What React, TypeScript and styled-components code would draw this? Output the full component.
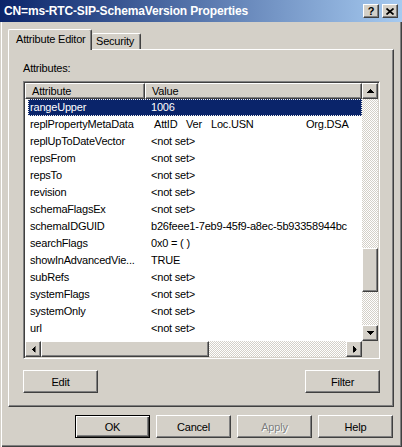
import React from 'react';
import styled, { createGlobalStyle, css } from 'styled-components';

const FACE = '#D4D0C8';
const SHADOW = '#808080';
const DARK = '#404040';
const NAVY = '#0A246A';

const GlobalStyle = createGlobalStyle`
  html, body {
    margin: 0;
    padding: 0;
    background: ${FACE};
  }
  body {
    font-family: "Liberation Sans", Arial, sans-serif;
    font-size: 11px;
    letter-spacing: -0.2px;
    color: #000;
  }
  * { box-sizing: border-box; }
`;

/* Classic Windows 3D edges */
const raised = css`
  border: 1px solid;
  border-color: #fff ${DARK} ${DARK} #fff;
  box-shadow: inset -1px -1px 0 ${SHADOW}, inset 1px 1px 0 ${FACE};
  background: ${FACE};
`;

const checker = css`
  background-color: #fff;
  background-image: repeating-conic-gradient(${FACE} 0 25%, #fff 0 50%);
  background-size: 2px 2px;
`;

const Window = styled.div`
  width: 402px;
  height: 447px;
  background: ${FACE};
  display: flex;
  flex-direction: column;
  box-shadow: inset 1px 0 0 ${FACE}, inset 2px 0 0 #fff, inset -1px -1px 0 ${DARK},
    inset -2px -2px 0 ${SHADOW};
`;

const TitleBar = styled.div`
  height: 22px;
  flex: none;
  display: flex;
  align-items: center;
  padding: 0 4px 0 4px;
  background: linear-gradient(to right, ${NAVY}, #a6caf0);
  color: #fff;
`;

const Title = styled.span`
  flex: 1;
  font: bold 12px "Liberation Sans", Arial, sans-serif;
  letter-spacing: -0.15px;
  white-space: nowrap;
`;

const CaptionButtons = styled.div`
  display: flex;
  gap: 3px;
`;

const CaptionButton = styled.div`
  ${raised};
  width: 16px;
  height: 14px;
  display: grid;
  place-items: center;
  color: #000;
  font: bold 11px "Liberation Sans", Arial, sans-serif;
  line-height: 12px;
`;

const Body = styled.div`
  flex: 1;
  display: flex;
  flex-direction: column;
  padding: 7px 8px 0 8px;
`;

const TabStrip = styled.div`
  display: flex;
  align-items: flex-end;
  height: 20px;
`;

const Tab = styled.div<{ $active?: boolean; $width: number }>`
  width: ${(p) => p.$width}px;
  border-top: 1px solid #fff;
  border-right: 1px solid ${DARK};
  border-radius: 2px 2px 0 0;
  box-shadow: inset -1px 0 0 ${SHADOW};
  background: ${FACE};
  white-space: nowrap;
  ${(p) =>
    p.$active
      ? css`
          position: relative;
          z-index: 1;
          height: 21px;
          margin-bottom: -1px;
          border-left: 1px solid #fff;
          padding: 3px 0 0 7px;
          line-height: 13px;
        `
      : css`
          height: 16px;
          padding: 1px 0 0 4px;
          line-height: 13px;
        `}
`;

const Panel = styled.div`
  height: 358px;
  border: 1px solid;
  border-color: #fff ${DARK} ${DARK} #fff;
  box-shadow: inset -1px -1px 0 ${SHADOW};
  padding: 12px 13px 0 14px;
  display: flex;
  flex-direction: column;
`;

const FieldLabel = styled.div`
  line-height: 13px;
  margin-bottom: 6px;
`;

const ListBox = styled.div`
  height: 278px;
  border: 1px solid;
  border-color: ${SHADOW} #fff #fff ${SHADOW};
  box-shadow: inset 1px 1px 0 ${DARK}, inset -1px -1px 0 ${FACE};
  padding: 1px;
  background: #fff;
  display: grid;
  grid-template-columns: 1fr 16px;
  grid-template-rows: 1fr 16px;
`;

const ListContent = styled.div`
  overflow: hidden;
  background: #fff;
  display: flex;
  flex-direction: column;
`;

const HeaderRow = styled.div`
  display: flex;
  height: 16px;
  flex: none;
`;

const HeaderCell = styled.div<{ $width?: number }>`
  ${raised};
  ${(p) => (p.$width ? `width: ${p.$width}px; flex: none;` : 'flex: 1;')}
  padding-left: 6px;
  line-height: 14px;
  white-space: nowrap;
`;

const Row = styled.div<{ $selected?: boolean }>`
  display: flex;
  height: 17px;
  flex: none;
  margin-left: 3px;
  line-height: 17px;
  white-space: nowrap;
  ${(p) =>
    p.$selected &&
    css`
      background: ${NAVY};
      color: #fff;
      outline: 1px dotted #f0f0f0;
      outline-offset: -1px;
    `}
`;

const AttrCell = styled.div`
  width: 117px;
  flex: none;
  padding-left: 2px;
  overflow: hidden;
`;

const ValueCell = styled.div`
  flex: 1;
  padding-left: 6px;
  display: flex;
`;

const MetaColumn = styled.span<{ $width: number; $lead?: number }>`
  width: ${(p) => p.$width}px;
  margin-left: ${(p) => p.$lead ?? 0}px;
  flex: none;
`;

const VScroll = styled.div`
  display: flex;
  flex-direction: column;
`;

const HScroll = styled.div`
  display: flex;
`;

const ArrowButton = styled.div`
  ${raised};
  width: 16px;
  height: 16px;
  flex: none;
  display: grid;
  place-items: center;
`;

const Track = styled.div<{ $vertical?: boolean }>`
  flex: 1;
  ${checker};
  display: flex;
  flex-direction: ${(p) => (p.$vertical ? 'column' : 'row')};
`;

const Thumb = styled.div<{ $vertical?: boolean; $offset: number; $size: number }>`
  ${raised};
  flex: none;
  ${(p) =>
    p.$vertical
      ? `margin-top: ${p.$offset}px; height: ${p.$size}px;`
      : `margin-left: ${p.$offset}px; width: ${p.$size}px;`}
`;

const Corner = styled.div`
  background: ${FACE};
`;

const ArrowSvg = styled.svg<{ $dir: 'up' | 'down' | 'left' | 'right' }>`
  display: block;
  transform: rotate(
    ${(p) => ({ up: 0, right: 90, down: 180, left: 270 }[p.$dir])}deg
  );
`;

const PanelActions = styled.div`
  display: flex;
  justify-content: space-between;
  margin-top: 11px;
`;

const Footer = styled.div`
  display: flex;
  justify-content: flex-end;
  gap: 6px;
  margin-top: 8px;
  padding-right: 1px;
`;

const Button = styled.div<{ $default?: boolean; $disabled?: boolean }>`
  width: 75px;
  height: 23px;
  display: grid;
  place-items: center;
  background: ${FACE};
  ${(p) =>
    p.$default
      ? css`
          border: 1px solid #000;
          box-shadow: inset 1px 1px 0 #fff, inset -1px -1px 0 ${DARK},
            inset -2px -2px 0 ${SHADOW};
        `
      : raised}
  ${(p) =>
    p.$disabled &&
    css`
      color: ${SHADOW};
      text-shadow: 1px 1px 0 #fff;
    `}
`;

const Arrow = ({ dir }: { dir: 'up' | 'down' | 'left' | 'right' }) => (
  <ArrowSvg $dir={dir} width="7" height="4" viewBox="0 0 7 4" shapeRendering="crispEdges">
    <path d="M3 0h1v1h1v1h1v1h1v1H0V3h1V2h1V1h1z" fill="#000" />
  </ArrowSvg>
);

type Attr = { name: string; value: string | string[]; selected?: boolean };

const attributes: Attr[] = [
  { name: 'rangeUpper', value: '1006', selected: true },
  { name: 'replPropertyMetaData', value: ['AttID', 'Ver', 'Loc.USN', 'Org.DSA'] },
  { name: 'replUpToDateVector', value: '<not set>' },
  { name: 'repsFrom', value: '<not set>' },
  { name: 'repsTo', value: '<not set>' },
  { name: 'revision', value: '<not set>' },
  { name: 'schemaFlagsEx', value: '<not set>' },
  { name: 'schemaIDGUID', value: 'b26feee1-7eb9-45f9-a8ec-5b93358944bc' },
  { name: 'searchFlags', value: '0x0 = (  )' },
  { name: 'showInAdvancedVie...', value: 'TRUE' },
  { name: 'subRefs', value: '<not set>' },
  { name: 'systemFlags', value: '<not set>' },
  { name: 'systemOnly', value: '<not set>' },
  { name: 'url', value: '<not set>' },
  { name: 'uSNChanged', value: '47537' },
];

const metaLayout = [
  { width: 32, lead: 3 },
  { width: 25 },
  { width: 95 },
  { width: 60 },
];

export default function App() {
  return (
    <>
      <GlobalStyle />
      <Window>
        <TitleBar>
          <Title>CN=ms-RTC-SIP-SchemaVersion Properties</Title>
          <CaptionButtons>
            <CaptionButton>?</CaptionButton>
            <CaptionButton>
              <svg width="8" height="7" viewBox="0 0 8 7">
                <path d="M0.5 0.5L7.5 6.5M7.5 0.5L0.5 6.5" stroke="#000" strokeWidth="1.7" />
              </svg>
            </CaptionButton>
          </CaptionButtons>
        </TitleBar>
        <Body>
          <TabStrip>
            <Tab $active $width={84}>Attribute Editor</Tab>
            <Tab $width={49}>Security</Tab>
          </TabStrip>
          <Panel>
            <FieldLabel>Attributes:</FieldLabel>
            <ListBox>
              <ListContent>
                <HeaderRow>
                  <HeaderCell $width={120}>Attribute</HeaderCell>
                  <HeaderCell>Value</HeaderCell>
                </HeaderRow>
                {attributes.map((a) => (
                  <Row key={a.name} $selected={a.selected}>
                    <AttrCell>{a.name}</AttrCell>
                    <ValueCell>
                      {Array.isArray(a.value)
                        ? a.value.map((v, i) => (
                            <MetaColumn key={v} $width={metaLayout[i].width} $lead={metaLayout[i].lead}>
                              {v}
                            </MetaColumn>
                          ))
                        : a.value}
                    </ValueCell>
                  </Row>
                ))}
              </ListContent>
              <VScroll>
                <ArrowButton>
                  <Arrow dir="up" />
                </ArrowButton>
                <Track $vertical>
                  <Thumb $vertical $offset={149} $size={44} />
                </Track>
                <ArrowButton>
                  <Arrow dir="down" />
                </ArrowButton>
              </VScroll>
              <HScroll>
                <ArrowButton>
                  <Arrow dir="left" />
                </ArrowButton>
                <Track>
                  <Thumb $offset={0} $size={168} />
                </Track>
                <ArrowButton>
                  <Arrow dir="right" />
                </ArrowButton>
              </HScroll>
              <Corner />
            </ListBox>
            <PanelActions>
              <Button>Edit</Button>
              <Button>Filter</Button>
            </PanelActions>
          </Panel>
          <Footer>
            <Button $default>OK</Button>
            <Button>Cancel</Button>
            <Button $disabled>Apply</Button>
            <Button>Help</Button>
          </Footer>
        </Body>
      </Window>
    </>
  );
}
